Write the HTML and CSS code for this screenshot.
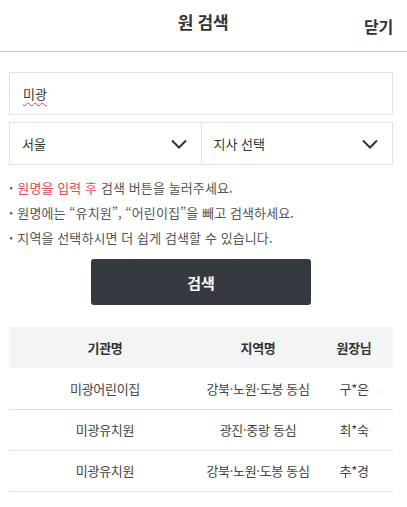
FILE: index.html
```html
<!DOCTYPE html>
<html lang="ko">
<head>
	<meta charset="UTF-8">
	<title>원 검색</title>
	<link rel="stylesheet" href="styles.css">
</head>
<body>

<div class="header">
	<span></span>
	<h1 class="title">원 검색</h1>
	<a class="close">닫기</a>
</div>

<div class="content">
	<div class="search-box"><span class="typo">미광</span></div>

	<div class="selects">
		<div class="select">
			<span>서울</span>
			<svg width="16" height="10" viewBox="0 0 16 10"><path d="M1 1.5 L8 8.5 L15 1.5" fill="none" stroke="#333" stroke-width="2"/></svg>
		</div>
		<div class="select">
			<span>지사 선택</span>
			<svg width="16" height="10" viewBox="0 0 16 10"><path d="M1 1.5 L8 8.5 L15 1.5" fill="none" stroke="#333" stroke-width="2"/></svg>
		</div>
	</div>

	<ul class="notes">
		<li><em>원명을 입력 후</em> 검색 버튼을 눌러주세요.</li>
		<li>원명에는 “유치원”, “어린이집”을 빼고 검색하세요.</li>
		<li>지역을 선택하시면 더 쉽게 검색할 수 있습니다.</li>
	</ul>

	<div class="btn-wrap"><button class="btn">검색</button></div>

	<table class="result">
		<thead>
			<tr><th class="c1">기관명</th><th class="c2">지역명</th><th class="c3">원장님</th></tr>
		</thead>
		<tbody>
			<tr><td>미광어린이집</td><td>강북·노원·도봉 동심</td><td>구*은</td></tr>
			<tr><td>미광유치원</td><td>광진·중랑 동심</td><td>최*숙</td></tr>
			<tr><td>미광유치원</td><td>강북·노원·도봉 동심</td><td>추*경</td></tr>
		</tbody>
	</table>
</div>

</body>
</html>
```

FILE: styles.css
```css
*{margin: 0;padding: 0;box-sizing: border-box;}
ul{list-style: none;}
body{
	font-family: "Noto Sans CJK KR", "Noto Sans", sans-serif;
	color: #333;
	background: #fff;
}
/*상단*/
.header{
	display: grid;
	grid-template-columns: 1fr auto 1fr;
	height: 52px;
	padding: 0 14px 0 9px;
	border-bottom: 1px solid #c8c8c8;
}
.header .title{
	font-size: 17px;
	font-weight: bold;
	line-height: 24px;
	padding-top: 10px;
	padding-left: 4px;
	letter-spacing: -0.3px;
}
.header .close{
	justify-self: end;
	font-size: 16px;
	font-weight: bold;
	line-height: 24px;
	padding-top: 14px;
	letter-spacing: -0.2px;
	cursor: pointer;
}

.content{
	padding: 20px 14px 0 9px;
}
/*검색창*/
.search-box{
	height: 43px;
	border: 1px solid #e2e2e2;
	padding: 0 13px;
	display: flex;
	align-items: center;
	font-size: 13px;
	color: #333;
}
.search-box .typo{
	text-decoration: underline wavy #e0404a;
	text-decoration-thickness: 1px;
	text-underline-offset: 3px;
}
.selects{
	display: flex;
	margin-top: 7px;
	border: 1px solid #e2e2e2;
}
.select{
	flex: 1;
	height: 41px;
	display: flex;
	align-items: center;
	justify-content: space-between;
	padding: 0 14px 0 12px;
	font-size: 13px;
	color: #333;
}
.select + .select{
	border-left: 1px solid #e2e2e2;
}
/*안내*/
.notes{
	margin-top: 10px;
	font-size: 13px;
	line-height: 25px;
	color: #555;
	letter-spacing: 0.1px;
}
.notes li::before{
	content: "·";
	font-weight: bold;
	margin-right: 4px;
}
.notes em{
	font-style: normal;
	color: #e5484f;
}
.btn-wrap{
	display: flex;
	justify-content: center;
	margin-top: 9px;
}
.btn{
	width: 220px;
	height: 46px;
	border: none;
	border-radius: 3px;
	background: #363a40;
	color: #fff;
	font-family: inherit;
	font-size: 15px;
	font-weight: bold;
}
/*결과*/
.result{
	width: 100%;
	margin-top: 22px;
	border-collapse: collapse;
	font-size: 13px;
	letter-spacing: -0.3px;
}
.result th{
	background: #f4f4f4;
	height: 41px;
	font-weight: bold;
	color: #333;
}
.result td{
	height: 41px;
	text-align: center;
	color: #444;
	border-bottom: 1px solid #e2e2e2;
}
.result .c1{width: 50%;}
.result .c2{width: 29.7%;}
.result .c3{width: 20.3%;}
```
